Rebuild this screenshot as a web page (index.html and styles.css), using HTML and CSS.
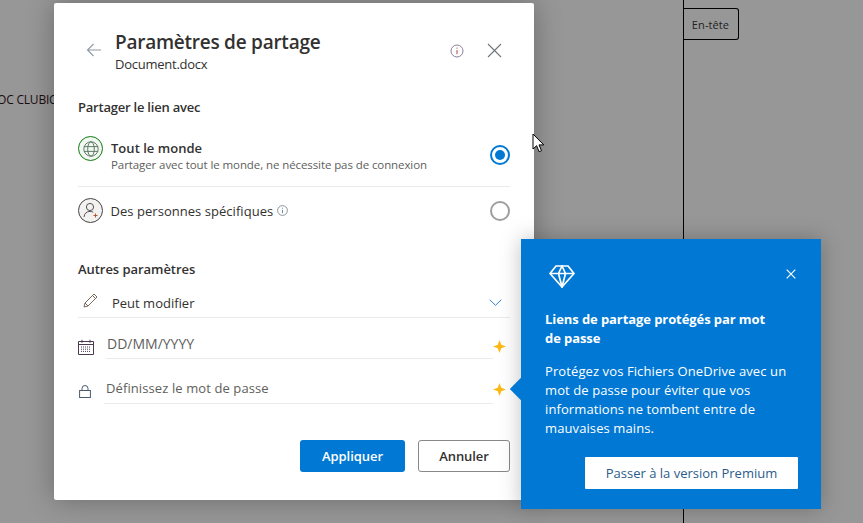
FILE: index.html
```html
<!DOCTYPE html>
<html lang="fr">
<head>
<meta charset="utf-8">
<title>Paramètres de partage</title>
<link rel="stylesheet" href="styles.css">
</head>
<body>
<div class="backdrop">
  <div class="doc-text">OC CLUBIC</div>
  <div class="margin-line"></div>
  <div class="header-tag">En-tête</div>
</div>

<section class="dialog">
  <header class="dlg-head">
    <svg class="back" width="16" height="14" viewBox="0 0 16 14"><path d="M15 7H1.500M7.500 1 1.500 7l6 6" fill="none" stroke="#8f9aa3" stroke-width="1.100"/></svg>
    <div class="dlg-titles">
      <h1 class="title">Paramètres de partage</h1>
      <div class="subtitle">Document.docx</div>
    </div>
    <svg class="info-lg" width="14" height="14" viewBox="0 0 14 14"><circle cx="7" cy="7" r="6" fill="none" stroke="#8a7f9c" stroke-width="1"/><path d="M7 6v4.200M7 3.600v1.100" stroke="#b0483a" stroke-width="1"/></svg>
    <svg class="close" width="15" height="15" viewBox="0 0 15 15"><path d="M1 1l13 13M14 1 1 14" stroke="#6f7478" stroke-width="1.100" fill="none"/></svg>
  </header>

  <h2 class="section-label first">Partager le lien avec</h2>

  <div class="option option-a">
    <span class="avatar avatar-green">
      <svg width="16" height="16" viewBox="0 0 16 16" fill="none" stroke="#55705a" stroke-width=".9"><circle cx="8" cy="8" r="7.200"/><ellipse cx="8" cy="8" rx="3.300" ry="7.200"/><path d="M1 5.600h14M1 10.400h14"/></svg>
    </span>
    <div class="option-text">
      <div class="option-title">Tout le monde</div>
      <div class="option-desc">Partager avec tout le monde, ne nécessite pas de connexion</div>
    </div>
    <span class="radio radio-on"></span>
  </div>

  <div class="option option-b">
    <span class="avatar avatar-grey">
      <svg width="16" height="17" viewBox="0 0 16 17" fill="none" stroke="#555" stroke-width="1"><circle cx="7" cy="5" r="3.600"/><path d="M1 15c.4-3.600 2.600-5.600 6-5.600 1.300 0 2.400.3 3.300.9"/><path d="M12.500 11.500v4M10.500 13.500h4" stroke="#b5562f"/></svg>
    </span>
    <span class="option-name">Des personnes spécifiques</span>
    <svg class="info-sm" width="11" height="11" viewBox="0 0 11 11"><circle cx="5.500" cy="5.500" r="4.900" fill="none" stroke="#7d8a92" stroke-width=".9"/><path d="M5.500 4.800v3.400M5.500 2.700v1" stroke="#6b7780" stroke-width=".9"/></svg>
    <span class="radio"></span>
  </div>

  <h2 class="section-label second">Autres paramètres</h2>

  <div class="field field-select">
    <svg class="pencil" width="15" height="15" viewBox="0 0 15 15" fill="none" stroke="#7a6a5c" stroke-width="1"><path d="M1 14l1-4L11 1l3 3-9 9z"/><path d="M2 10l3 3M9.500 2.500l3 3"/></svg>
    <span class="select-value">Peut modifier</span>
    <svg class="chev" width="13" height="7" viewBox="0 0 13 7"><path d="M.7.7l5.800 5.600L12.300.7" fill="none" stroke="#2f86d6" stroke-width="1"/></svg>
  </div>

  <div class="field-row row-date">
    <svg class="field-ico" width="16" height="16" viewBox="0 0 16 16" fill="none"><path d="M.5 2.500h15v13H.5zM.5 5.500h15M4 .8v3M12 .8v3" stroke="#4b3a52"/><path d="M3 8h10M3 10.200h10M3 12.400h10" stroke="#4b3a52" stroke-dasharray="1 1"/></svg>
    <div class="input"><span class="ph ph-date">DD/MM/YYYY</span></div>
    <svg class="spark" width="13" height="13" viewBox="0 0 14 14"><path d="M7 0 8.900 5.100 14 7 8.900 8.900 7 14 5.100 8.900 0 7 5.100 5.100z" fill="#fdb913"/></svg>
  </div>

  <div class="field-row row-pass">
    <svg class="field-ico lock" width="12" height="13" viewBox="0 0 12 13" fill="none" stroke="#4a5a72"><rect x=".6" y="5.500" width="10.800" height="7"/><path d="M3 5.500V3.500a3 3 0 0 1 6 0v2"/></svg>
    <div class="input"><span class="ph ph-pass">Définissez le mot de passe</span></div>
    <svg class="spark" width="13" height="13" viewBox="0 0 14 14"><path d="M7 0 8.900 5.100 14 7 8.900 8.900 7 14 5.100 8.900 0 7 5.100 5.100z" fill="#fdb913"/></svg>
  </div>

  <footer class="actions">
    <button class="btn btn-primary">Appliquer</button>
    <button class="btn btn-ghost">Annuler</button>
  </footer>
</section>

<aside class="callout">
  <span class="callout-arrow"></span>
  <div class="callout-top">
    <svg width="26" height="23" viewBox="0 0 26 23" fill="none" stroke="#fff" stroke-width="1.700" stroke-linejoin="round"><path d="M7 1h12l6 7.500L13 22 1 8.500z"/><path d="M1 8.500h24M9.500 8.500 13 22l3.500-13.500M9.500 8.500 13 1l3.500 7.500"/></svg>
    <svg class="callout-close" width="10" height="10" viewBox="0 0 10 10"><path d="M.7.700l8.600 8.600M9.300.700.7 9.300" stroke="#fff" stroke-width="1.200"/></svg>
  </div>
  <h3 class="callout-title">Liens de partage protégés par mot de&nbsp;passe</h3>
  <p class="callout-body">Protégez vos Fichiers OneDrive avec un mot de passe pour éviter que vos informations ne tombent entre de mauvaises mains.</p>
  <div class="callout-foot"><button class="btn-premium">Passer à la version Premium</button></div>
</aside>

<svg class="cursor" width="13" height="20" viewBox="0 0 13 20"><path d="M1 1v15l3.600-3.300 2.500 6 2.400-1-2.500-5.800h4.800z" fill="#fff" stroke="#000" stroke-width="1"/></svg>
</body>
</html>
```
FILE: styles.css
```css
* { box-sizing: border-box; }
html, body { margin: 0; height: 100%; }
body {
  width: 863px;
  height: 523px;
  overflow: hidden;
  position: relative;
  background: #979797;
  font-family: "Open Sans", "Noto Sans", sans-serif;
  color: #323130;
}
.backdrop { position: absolute; inset: 0; }
.doc-text {
  position: absolute; left: -3px; top: 92px;
  font-size: 12px; line-height: 16px; color: #1b0d10; white-space: nowrap; letter-spacing: -.2px;
}
.margin-line { position: absolute; left: 683px; top: 0; bottom: 0; width: 1px; background: #000; }
.header-tag {
  position: absolute; left: 683px; top: 8px; width: 56px; height: 32px;
  border: 1px solid #000; border-left: 0; border-radius: 0 3px 3px 0;
  font-size: 11px; line-height: 32px; text-align: center; color: #222; letter-spacing: .1px;
}

.dialog {
  position: absolute; left: 54px; top: 3px; width: 480px; height: 497px;
  background: #fff; padding: 0 24px; border-radius: 2px;
  box-shadow: 0 0 28px rgba(0,0,0,.3);
  display: flex; flex-direction: column;
}
.dlg-head { display: flex; align-items: flex-start; height: 73px; padding: 27px 8px 0 8px; }
.back { margin: 13px 13px 0 0; flex: none; }
.dlg-titles { flex: 1; }
.title { margin: 0; font-size: 19px; line-height: 24px; font-weight: 600; color: #323130; letter-spacing: -.25px; }
.subtitle { font-size: 13px; line-height: 18px; margin-top: 1px; letter-spacing: -.25px; }
.info-lg { margin: 14px 23px 0 0; }
.close { margin: 13px 0 0 0; }

.section-label { margin: 0; font-size: 13px; line-height: 18px; font-weight: 600; letter-spacing: -.22px; }
.section-label.first { margin-top: 22px; }
.section-label.second { margin-top: 26px; letter-spacing: -.05px; }

.option { display: flex; align-items: center; }
.option-a { margin-top: 12px; height: 59px; border-bottom: 1px solid #edebe9; padding-bottom: 5px; }
.option-b { height: 47px; }
.avatar {
  width: 25px; height: 25px; border-radius: 50%; flex: none;
  display: flex; align-items: center; justify-content: center; margin-right: 8px;
}
.avatar-green { border: 1px solid #107c10; background: #f1f7f1; align-self: flex-start; margin-top: 8px; }
.avatar-grey { border: 1px solid #444; background: #f3f2f1; }
.option-text { flex: 1; margin-top: 3px; }
.option-title { font-size: 13px; line-height: 17px; font-weight: 600; letter-spacing: .03px; }
.option-desc { font-size: 11.500px; line-height: 16px; color: #605e5c; letter-spacing: -.09px; }
.option-name { font-size: 13px; color: #323130; margin-left: -.5px; letter-spacing: .04px; }
.info-sm { margin-left: 4px; margin-right: auto; }
.radio { width: 20px; height: 20px; border-radius: 50%; border: 2px solid #a19f9d; flex: none; background: #fff; }
.radio-on { border-color: #0078d4; position: relative; }
.radio-on::after {
  content: ""; position: absolute; left: 3px; top: 3px; width: 10px; height: 10px;
  border-radius: 50%; background: #0078d4;
}

.field-select { display: flex; align-items: center; height: 33px; margin-top: 7px; border-bottom: 1px solid #edebe9; padding: 4px 8px 0 5px; }
.pencil { flex: none; margin: -6px 14px 0 0; }
.select-value { flex: 1; font-size: 13px; }
.chev { margin-top: -2px; }

.field-row { display: flex; align-items: flex-start; }
.field-ico { flex: none; }
.row-date { margin-top: 9px; height: 32px; }
.row-date .field-ico { margin: 12px 12px 0 0; }
.row-pass { margin-top: 13px; height: 32px; }
.row-pass .field-ico { margin: 13px 13px 0 1px; }
.input { flex: 1; height: 32px; border-bottom: 1px solid #edebe9; display: flex; align-items: center; }
.ph { font-size: 13px; color: #605e5c; }
.ph-date { font-size: 14px; padding: 0 0 0 1px; margin-top: 1px; }
.ph-pass { padding-left: 2px; letter-spacing: .1px; }
.spark { flex: none; margin: 13px 4px 0 0; }
.row-pass .spark { margin-top: 11px; }

.actions { display: flex; justify-content: flex-end; gap: 13px; margin-top: 36px; }
.btn {
  height: 32px; border-radius: 3px; font: 600 13px/1 "Open Sans", sans-serif; letter-spacing: -.05px; padding: 0;
}
.btn-primary { width: 105px; background: #0078d4; color: #fff; border: 0; }
.btn-ghost { width: 92px; background: #fff; color: #323130; border: 1px solid #8a8886; }

.callout {
  position: absolute; left: 521px; top: 239px; width: 300px; height: 270px;
  background: #0078d4; color: #fff; padding: 0 23px 0 24px;
  box-shadow: 0 0 20px rgba(0,0,0,.25);
}
.callout-arrow {
  position: absolute; left: -11px; top: 139px; width: 22px; height: 22px;
  background: #0078d4; transform: rotate(45deg) scale(.72);
}
.callout-top { display: flex; align-items: center; justify-content: space-between; height: 40px; margin-top: 17px; padding: 0 2px 0 4px; }
.callout-close { margin-top: -4px; }
.callout-title { margin: 14px 0 0; font-size: 13px; line-height: 19px; font-weight: 700; width: 230px; letter-spacing: -.08px; }
.callout-body { margin: 14px 0 0; font-size: 13px; line-height: 19px; letter-spacing: .1px; }
.callout-foot { display: flex; justify-content: flex-end; margin-top: 19px; }
.btn-premium {
  width: 213px; height: 32px; background: #fff; border: 0; border-radius: 1px;
  color: #2b5c8c; font: 400 13px/1 "Open Sans", sans-serif; padding: 0;
}
.cursor { position: absolute; left: 532px; top: 133px; }
```
